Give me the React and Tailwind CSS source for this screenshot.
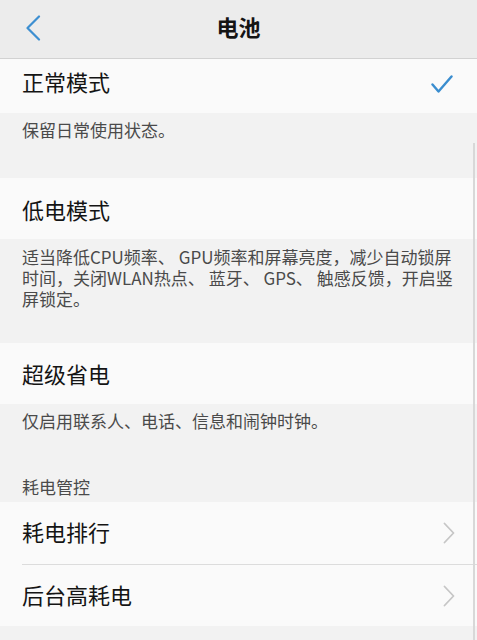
const font = { fontFamily: '"Noto Sans CJK SC", "Noto Sans", sans-serif' };

function Check() {
  return (
    <svg width="22" height="19" viewBox="0 0 22 19" fill="none">
      <path d="M1.5 9.5 L7.5 16.5 L20.5 1.5" stroke="#3a8dcf" strokeWidth="2.4" strokeLinecap="round" strokeLinejoin="round" />
    </svg>
  );
}

function Chevron() {
  return (
    <svg width="12" height="22" viewBox="0 0 12 22" fill="none">
      <path d="M1.5 1.5 L10.5 11 L1.5 20.5" stroke="#c6c6c6" strokeWidth="1.8" strokeLinecap="round" strokeLinejoin="round" />
    </svg>
  );
}

function Row({ title, right, className = '' }) {
  return (
    <div className={`flex items-center justify-between bg-[#fafafa] pl-[22px] pr-[22px] ${className}`}>
      <span className="relative -top-[2px] text-[22px] leading-[30px] text-[#141414]">{title}</span>
      {right}
    </div>
  );
}

function Desc({ children, className = '' }) {
  return (
    <div className={`bg-[#f2f2f2] px-[22px] text-[17px] leading-[21px] text-[#4a4a4a] ${className}`}>
      {children}
    </div>
  );
}

export default function App() {
  return (
    <div className="relative h-[640px] w-full overflow-hidden bg-[#f2f2f2]" style={font}>
      <div className="relative flex h-[59px] items-center justify-center border-b border-[#d2d2d2] bg-[#ececec]">
        <svg className="absolute left-[25px] top-[15px]" width="16" height="26" viewBox="0 0 16 26" fill="none">
          <path d="M14 1.5 L2.5 13 L14 24.5" stroke="#3d8fd1" strokeWidth="2.2" strokeLinecap="round" strokeLinejoin="round" />
        </svg>
        <span className="relative -top-[3px] text-[22px] font-bold leading-[30px] text-[#141414]">电池</span>
      </div>

      <Row title="正常模式" className="h-[54px] pb-[6px]" right={<div className="pr-[2px] pt-[2px]"><Check /></div>} />
      <Desc className="h-[65px] pt-[6px]">保留日常使用状态。</Desc>

      <Row title="低电模式" className="h-[61px] pt-[4px]" />
      <Desc className="h-[104px] pt-[7px]">
        适当降低CPU频率、 GPU频率和屏幕亮度，减少自动锁屏时间，关闭WLAN热点、 蓝牙、 GPS、 触感反馈，开启竖屏锁定。
      </Desc>

      <Row title="超级省电" className="h-[61px] pt-[3px]" />
      <Desc className="pt-[6px]">仅启用联系人、电话、信息和闹钟时钟。</Desc>
      <div className="px-[22px] pb-[5px] pt-[45px] text-[17px] leading-[21px] text-[#4a4a4a]">耗电管控</div>

      <Row title="耗电排行" className="h-[62px]" right={<Chevron />} />
      <div className="bg-[#fafafa] pl-[22px]">
        <div className="h-px bg-[#dcdcdc]" />
      </div>
      <Row title="后台高耗电" className="h-[61px]" right={<Chevron />} />

      <div className="absolute bottom-0 right-[2px] top-[143px] w-[2px] bg-[#d8d8d8]" />
    </div>
  );
}
